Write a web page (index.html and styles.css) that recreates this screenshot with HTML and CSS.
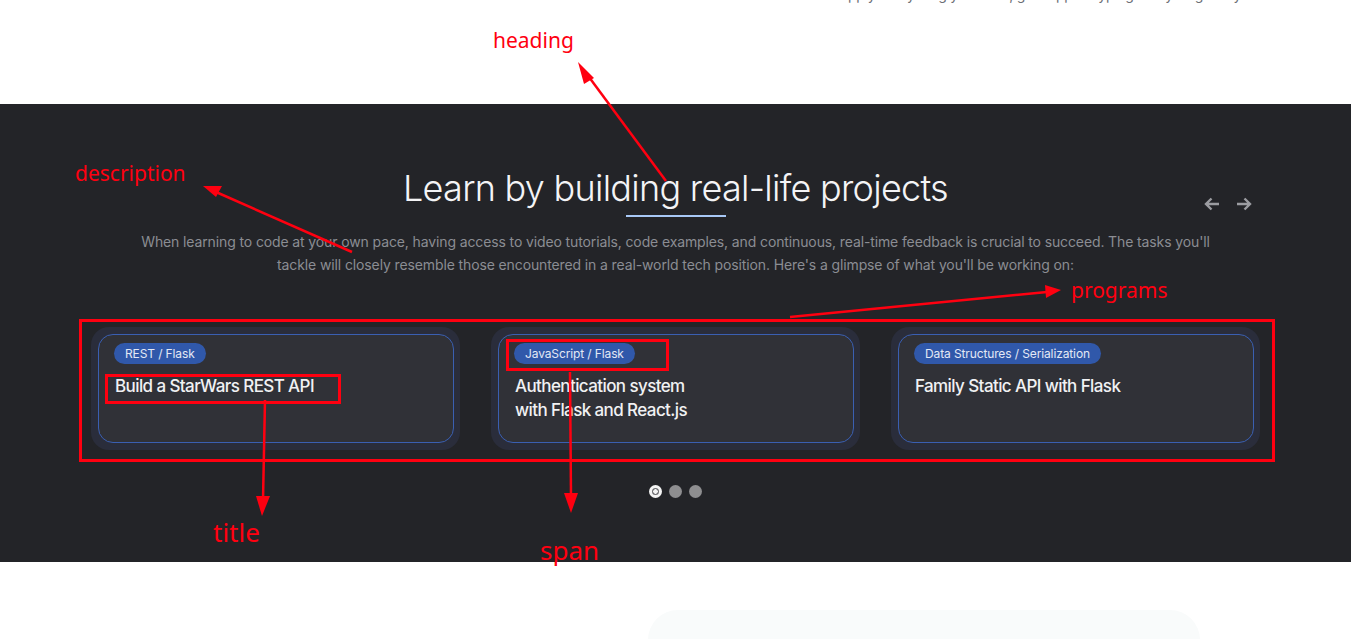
FILE: index.html
```html
<!DOCTYPE html>
<html>
<head>
	<title>Projects</title>
	<link rel="stylesheet" href="styles.css">
</head>
<body>

	<div class="top">
		<p class="top-text">apply everything you learn, get support typing every single day</p>
	</div>

	<section class="projects">
		<div class="wrap">
			<div class="head">
				<div></div>
				<h2 class="heading">Learn by building real-life projects</h2>
				<div class="nav">
					<svg width="18" height="18" viewBox="0 0 18 18"><path d="M16 9H3M8.5 3.5L3 9l5.5 5.5" fill="none" stroke="currentColor" stroke-width="2.4"/></svg>
					<svg width="18" height="18" viewBox="0 0 18 18"><path d="M2 9h13M9.5 3.5L15 9l-5.5 5.5" fill="none" stroke="currentColor" stroke-width="2.4"/></svg>
				</div>
			</div>
			<span class="line"></span>
			<p class="description">When learning to code at your own pace, having access to video tutorials, code examples, and continuous, real-time feedback is crucial to succeed. The tasks you'll tackle will closely resemble those encountered in a real-world tech position. Here's a glimpse of what you'll be working on:</p>

			<div class="programs">
				<div class="card">
					<div class="card-in">
						<span class="tag">REST / Flask</span>
						<h3 class="title">Build a StarWars REST API</h3>
					</div>
				</div>
				<div class="card">
					<div class="card-in">
						<span class="tag">JavaScript / Flask</span>
						<h3 class="title">Authentication system<br>with Flask and React.js</h3>
					</div>
				</div>
				<div class="card">
					<div class="card-in">
						<span class="tag">Data Structures / Serialization</span>
						<h3 class="title">Family Static API with Flask</h3>
					</div>
				</div>
			</div>

			<div class="dots">
				<span class="dot active"></span>
				<span class="dot"></span>
				<span class="dot"></span>
			</div>
		</div>
	</section>

	<div class="below">
		<div class="panel"></div>
	</div>

	<!-- notes drawn on top of the page -->
	<svg class="notes" width="1351" height="639" viewBox="0 0 1351 639">
		<g stroke="#ff0010" stroke-width="3" fill="none">
			<rect x="80.5" y="320.5" width="1193" height="140"/>
			<rect x="106.5" y="375.5" width="233" height="27"/>
			<rect x="507.5" y="340.5" width="160" height="29"/>
		</g>
		<g stroke="#ff0010" stroke-width="2.5" fill="none">
			<line x1="666" y1="181" x2="586" y2="73"/>
			<line x1="352" y1="252" x2="216" y2="192"/>
			<line x1="790" y1="317" x2="1047" y2="292"/>
			<line x1="265" y1="400" x2="263" y2="500"/>
			<line x1="570" y1="372" x2="571" y2="497"/>
		</g>
		<g fill="#ff0010">
			<path d="M578 62L594 78L584 84z"/>
			<path d="M203 186L222 186L216 197z"/>
			<path d="M1061 290L1045 285L1046 298z"/>
			<path d="M262 516L256 496L270 496z"/>
			<path d="M571 513L564 493L578 493z"/>
		</g>
		<g class="label" fill="#ff0010">
			<text x="493" y="48">heading</text>
			<text x="75" y="181">description</text>
			<text x="1071" y="298">programs</text>
			<text x="213" y="542" class="big">title</text>
			<text x="540" y="560" class="big">span</text>
		</g>
	</svg>

</body>
</html>
```

FILE: styles.css
```css
body{
	margin: 0;
	font-family: "Inter", "Liberation Sans", sans-serif;
	background: #fff;
	position: relative;
	overflow: hidden;
	height: 639px;
}

.top{
	height: 104px;
	display: flex;
	justify-content: flex-end;
	padding-right: 110px;
	box-sizing: border-box;
	overflow: hidden;
}

.top-text{
	margin: -14px 0 0;
	font-size: 14px;
	line-height: 17px;
	color: #6b6e75;
	white-space: nowrap;
	letter-spacing: -0.02em;
}

.projects{
	background: #232428;
	height: 458px;
	box-sizing: border-box;
	padding-top: 62px;
}

.wrap{
	width: 1169px;
	margin: 0 auto;
	display: flex;
	flex-direction: column;
	align-items: center;
}

.head{
	width: 100%;
	height: 44px;
	display: grid;
	grid-template-columns: 1fr auto 1fr;
	align-items: start;
}

.heading{
	margin: 0;
	font-size: 36px;
	font-weight: 300;
	line-height: 44px;
	color: #f4f4f6;
	letter-spacing: -0.02em;
}

.nav{
	justify-self: end;
	display: flex;
	gap: 14px;
	margin: 29px 7px 0 0;
	color: #9b9ca1;
}

.line{
	display: block;
	width: 100px;
	height: 2px;
	background: #a8c8f6;
	margin-top: 5px;
}

.description{
	margin: 13px 0 0;
	width: 1076px;
	text-align: center;
	font-size: 14px;
	line-height: 23px;
	color: #8b8d93;
	letter-spacing: -0.12px;
}

.programs{
	width: 100%;
	display: grid;
	grid-template-columns: repeat(3, 369px);
	gap: 31px;
	margin-top: 51px;
}

.card{
	background: #2a2d3b;
	border-radius: 18px;
	padding: 7px 6px 7px 7px;
}

.card-in{
	height: 109px;
	box-sizing: border-box;
	border: 1px solid #3a5fb2;
	border-radius: 15px;
	background: #303137;
	padding: 7px 15px;
}

.tag{
	display: inline-block;
	background: #3058aa;
	color: #e3e8f5;
	font-size: 12px;
	line-height: 21px;
	padding: 0 11px;
	border-radius: 11px;
	letter-spacing: -0.01em;
}

.title{
	margin: 10px 0 0 1px;
	font-size: 17px;
	font-weight: 500;
	line-height: 24px;
	color: #f1f1f3;
	letter-spacing: -0.035em;
}

.dots{
	display: flex;
	gap: 7px;
	margin-top: 35px;
}

.dot{
	width: 13px;
	height: 13px;
	border-radius: 50%;
	background: #8e8e90;
	box-sizing: border-box;
}

.dot.active{
	border: 3px solid #f4f4f4;
	background: radial-gradient(circle, #f4f4f4 0 2px, #6c6c70 2.5px);
}

.below{
	display: flex;
	justify-content: flex-end;
	padding: 48px 151px 0 0;
}

.panel{
	width: 552px;
	height: 60px;
	background: #f9fbfb;
	border-radius: 30px 30px 0 0;
}

.notes{
	position: absolute;
	top: 0;
	left: 0;
	pointer-events: none;
}

.label text{
	font-family: "Noto Sans", "Open Sans", sans-serif;
	font-size: 21px;
}

.label text.big{
	font-size: 26px;
}
```
